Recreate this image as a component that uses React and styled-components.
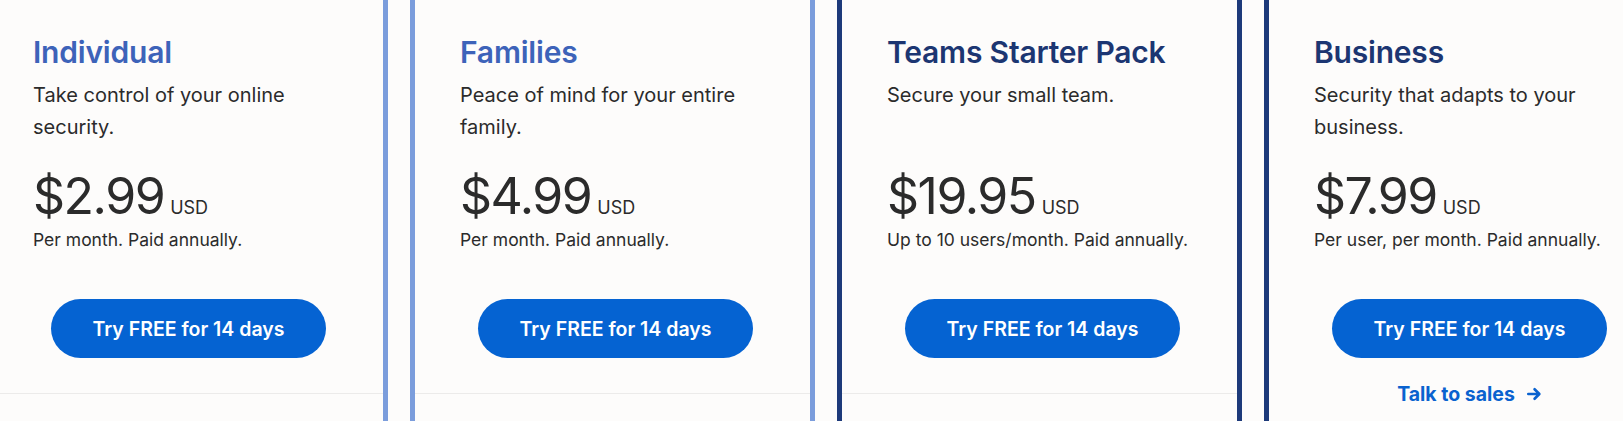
import styled, { createGlobalStyle } from "styled-components";

const GlobalStyle = createGlobalStyle`
  html, body {
    margin: 0;
    padding: 0;
    background: #fdfcfb;
  }
  body {
    font-family: "Inter", "Liberation Sans", sans-serif;
    color: #2b2b2b;
  }
`;

const plans = [
  {
    name: "Individual",
    desc: "Take control of your online security.",
    price: "$2.99",
    note: "Per month. Paid annually.",
    tone: "light",
  },
  {
    name: "Families",
    desc: "Peace of mind for your entire family.",
    price: "$4.99",
    note: "Per month. Paid annually.",
    tone: "light",
  },
  {
    name: "Teams Starter Pack",
    desc: "Secure your small team.",
    price: "$19.95",
    note: "Up to 10 users/month. Paid annually.",
    tone: "dark",
  },
  {
    name: "Business",
    desc: "Security that adapts to your business.",
    price: "$7.99",
    note: "Per user, per month. Paid annually.",
    tone: "dark",
    sales: true,
  },
];

const App = () => {
  return (
    <Page>
      <GlobalStyle />
      <Row>
        {plans.map((plan) => (
          <Card key={plan.name} tone={plan.tone}>
            <Top>
              <Title tone={plan.tone}>{plan.name}</Title>
              <Desc>{plan.desc}</Desc>
              <PriceLine>
                <Amount>{plan.price}</Amount>
                <Currency>USD</Currency>
              </PriceLine>
              <Note>{plan.note}</Note>
              <ButtonWrap>
                <TryButton>Try FREE for 14 days</TryButton>
              </ButtonWrap>
              {plan.sales && (
                <SalesLink href="#">
                  Talk to sales
                  <svg width="16" height="16" viewBox="0 0 14 14" fill="none">
                    <path
                      d="M2 7h9.5M7.5 2.8 11.7 7l-4.2 4.2"
                      stroke="currentColor"
                      strokeWidth="2.3"
                      strokeLinecap="round"
                      strokeLinejoin="round"
                    />
                  </svg>
                </SalesLink>
              )}
            </Top>
            {!plan.sales && <Features />}
          </Card>
        ))}
      </Row>
    </Page>
  );
};

export default App;

const Page = styled.div`
  width: 1623px;
  height: 421px;
  overflow: hidden;
`;

const Row = styled.div`
  display: flex;
  gap: 22px;
  margin-left: -17px;
  height: 100%;
`;

const Card = styled.div`
  flex: 0 0 405px;
  box-sizing: border-box;
  display: flex;
  flex-direction: column;
  border-left: 5px solid
    ${(p) => (p.tone === "dark" ? "#1d3a7a" : "#7b9ddc")};
  border-right: 5px solid
    ${(p) => (p.tone === "dark" ? "#1d3a7a" : "#7b9ddc")};
`;

const Top = styled.div`
  display: flex;
  flex-direction: column;
  padding: 34px 45px 0;
  height: 359px;
  box-sizing: content-box;
`;

const Title = styled.h2`
  margin: 0;
  font-size: 30px;
  line-height: 36px;
  font-weight: 600;
  letter-spacing: -0.2px;
  color: ${(p) => (p.tone === "dark" ? "#1c3672" : "#3d63b9")};
`;

const Desc = styled.p`
  margin: 9px 0 0;
  font-size: 20px;
  line-height: 32px;
  min-height: 64px;
  max-width: 300px;
  color: #2b2b2b;
`;

const PriceLine = styled.div`
  display: flex;
  align-items: baseline;
  margin-top: 25px;
`;

const Amount = styled.span`
  font-size: 50px;
  line-height: 56px;
  font-weight: 400;
  letter-spacing: -1.5px;
  color: #2b2b2b;
`;

const Currency = styled.span`
  margin-left: 6px;
  font-size: 18px;
  color: #2b2b2b;
`;

const Note = styled.div`
  margin-top: 4px;
  font-size: 17.5px;
  line-height: 24px;
  color: #2b2b2b;
`;

const ButtonWrap = styled.div`
  display: flex;
  justify-content: center;
  margin-top: 47px;
  padding-left: 6px;
`;

const TryButton = styled.button`
  width: 275px;
  height: 59px;
  border: none;
  border-radius: 30px;
  background: #0563d2;
  color: #ffffff;
  font-family: "Inter", "Liberation Sans", sans-serif;
  font-size: 19.5px;
  font-weight: 600;
  cursor: pointer;
`;

const SalesLink = styled.a`
  align-self: center;
  display: inline-flex;
  align-items: center;
  gap: 11px;
  margin-top: 24px;
  padding-left: 6px;
  font-size: 19.5px;
  font-weight: 700;
  color: #0a62cf;
  text-decoration: none;
`;

const Features = styled.div`
  flex: 1;
  border-top: 1px solid #ecebea;
`;
